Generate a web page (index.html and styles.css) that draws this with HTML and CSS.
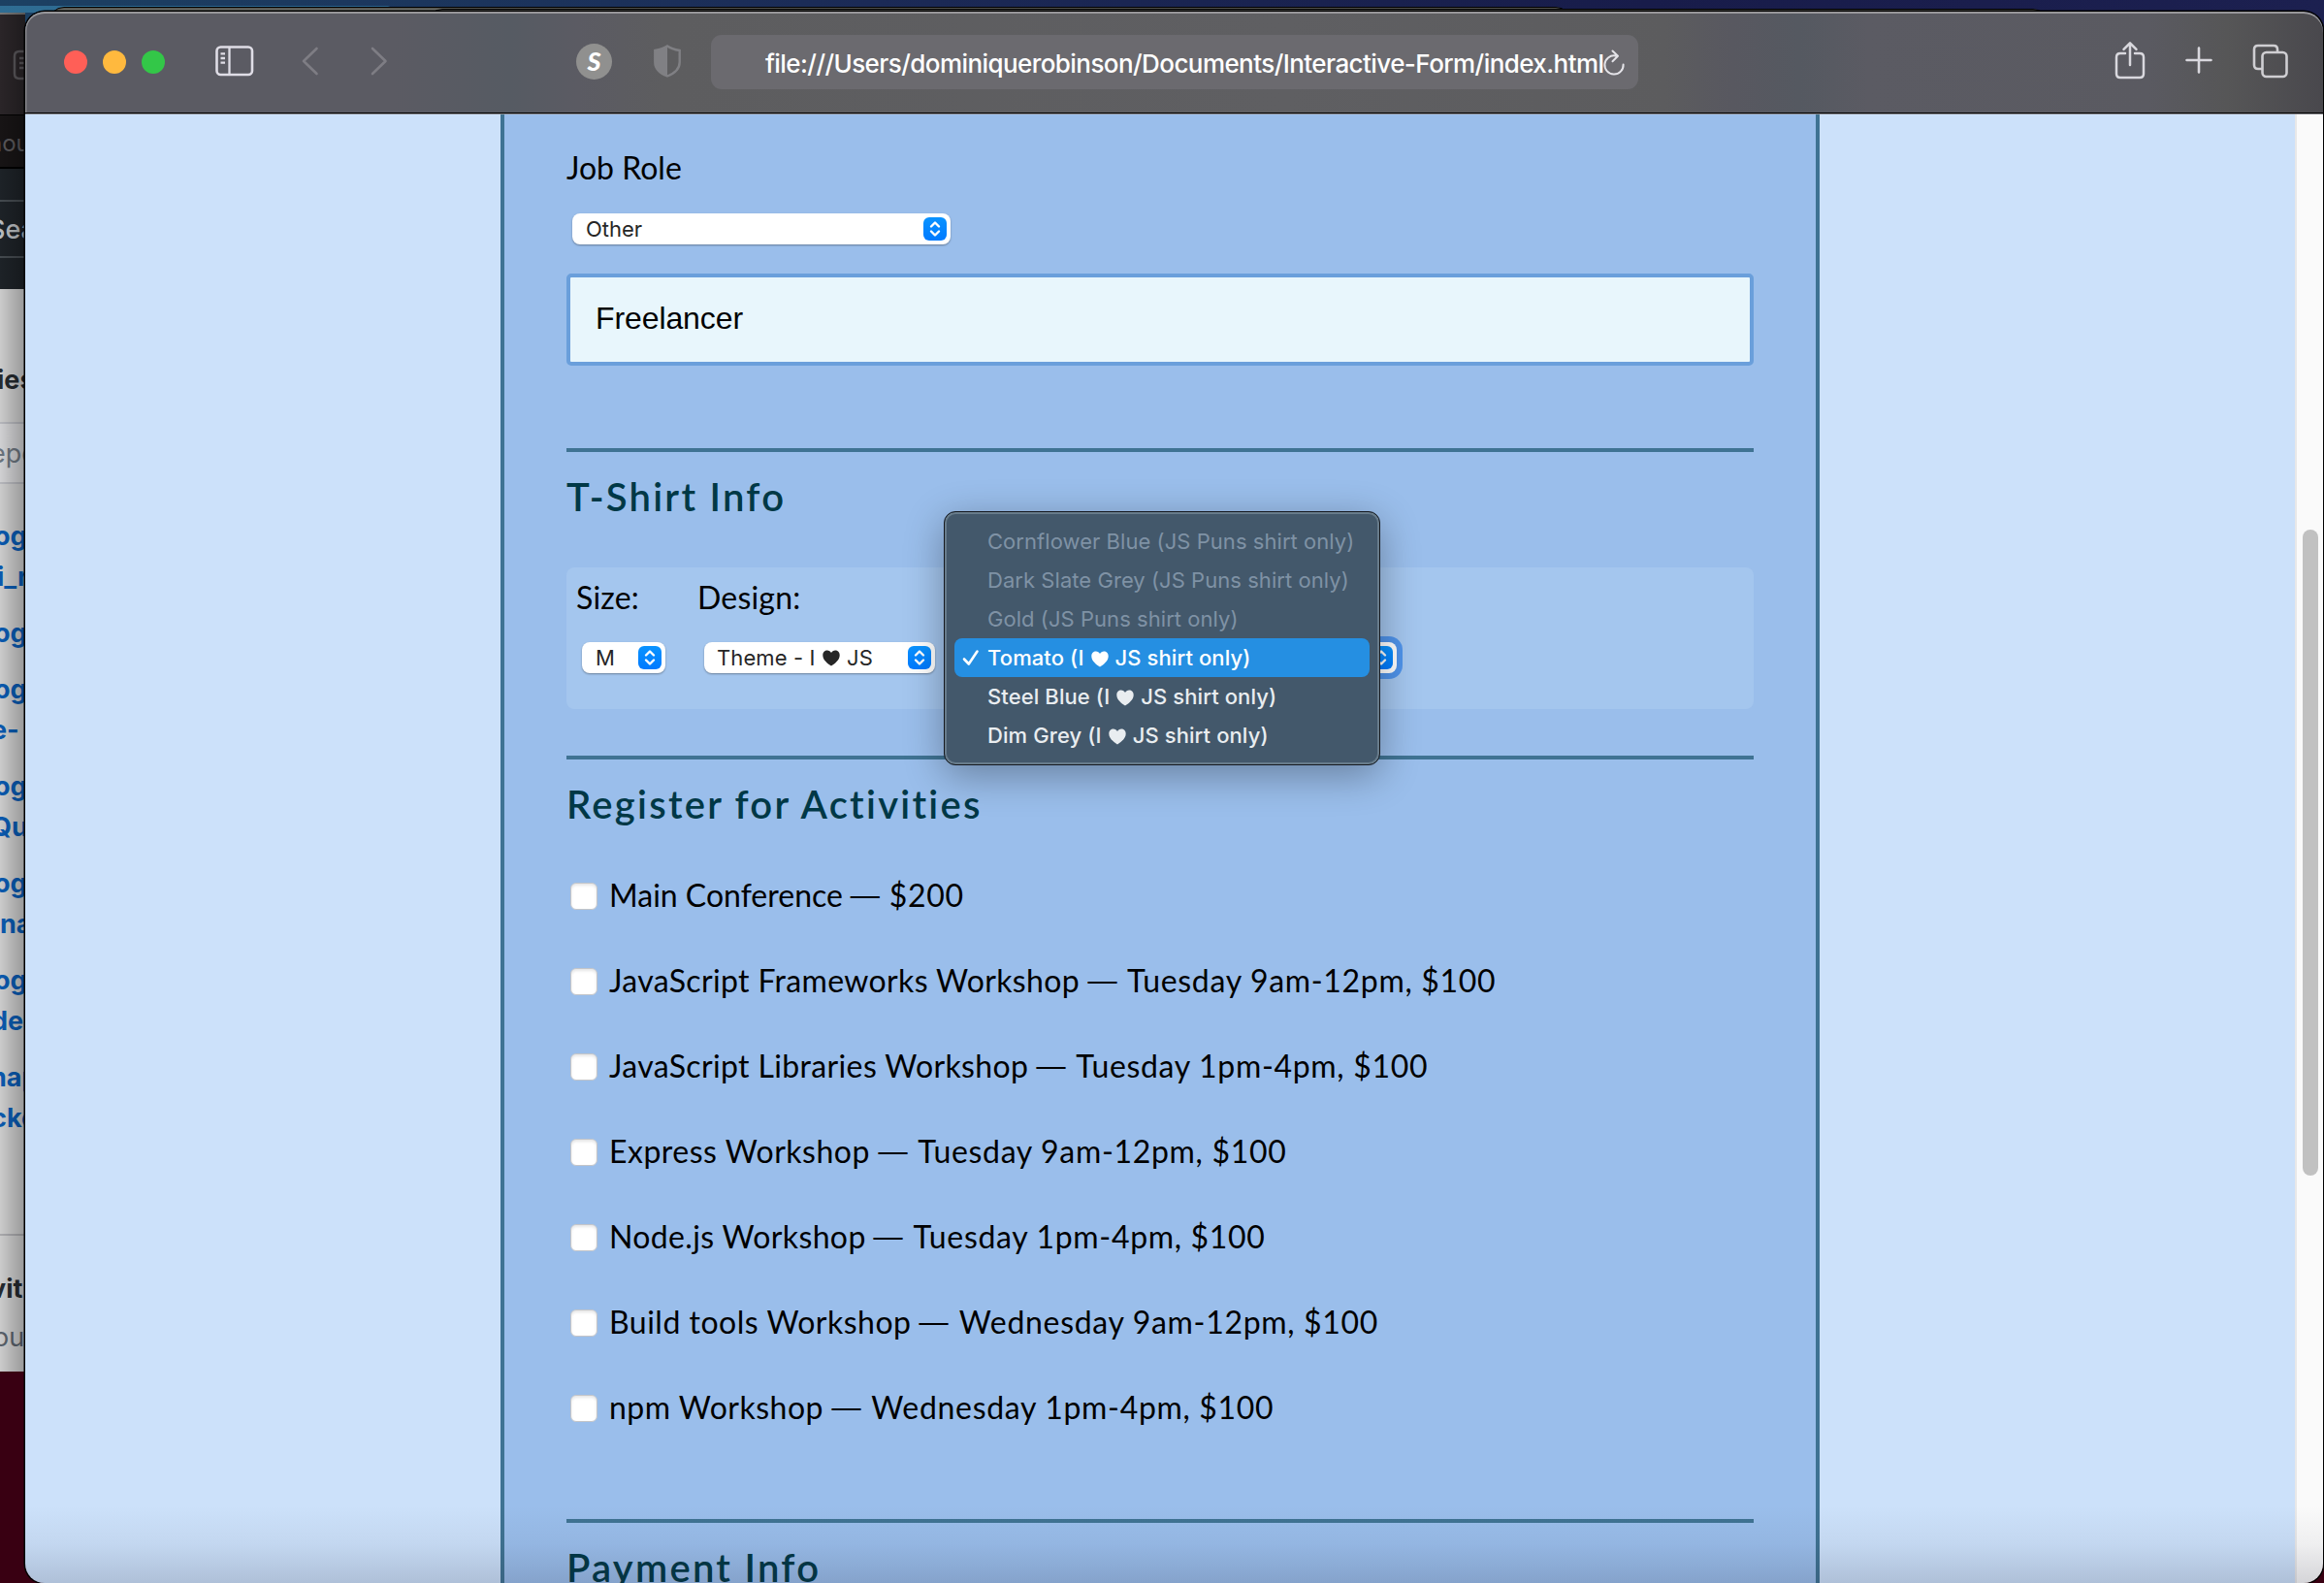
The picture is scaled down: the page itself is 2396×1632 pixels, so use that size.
FILE: index.html
```html
<!DOCTYPE html>
<html lang="en">
<head>
<meta charset="utf-8">
<title>Interactive Form</title>
<link rel="stylesheet" href="styles.css">
</head>
<body>
<svg class="defs" width="0" height="0">
  <symbol id="updown" viewBox="0 0 24 24"><path d="M8 9.5 12 5.5 16 9.5M8 14.5 12 18.5 16 14.5" fill="none" stroke="#fff" stroke-width="2.4" stroke-linecap="round" stroke-linejoin="round"/></symbol>
  <symbol id="heart" viewBox="0 0 18 17"><path d="M9 16.5C5 13.8 0.3 10.2 0.3 5.4 0.3 2.4 2.4 0.5 4.9 0.5 6.7 0.5 8.2 1.4 9 3 9.8 1.4 11.3 0.5 13.1 0.5 15.6 0.5 17.7 2.4 17.7 5.4 17.7 10.2 13 13.8 9 16.5Z" fill="currentColor"/></symbol>
</svg>
<div class="desktop">
  <div class="stack stack-a"></div>
  <div class="stack stack-b"></div>
  <div class="back-window">
    <div class="back-toolbar">
      <svg width="20" height="32" viewBox="0 0 20 32" fill="none" stroke="#59565a" stroke-width="2.5"><path d="M20 2H7Q2 2 2 7V25Q2 30 7 30H20M7 9H14M7 14H14M7 19H14"/></svg>
    </div>
    <div class="back-tabs">hou</div>
    <div class="back-nav"><div class="back-search">Sea</div></div>
    <div class="back-page">
      <div class="back-title">ies</div>
      <div class="back-find">epo</div>
      <div class="repo">og<br><span class="in1">i_r</span></div>
      <div class="repo">og</div>
      <div class="repo">og<br><span class="in2">e-</span></div>
      <div class="repo">og<br><span class="in2">Qu</span></div>
      <div class="repo">og<br><span>na</span></div>
      <div class="repo">og<br><span class="in2">de.</span></div>
      <div class="repo"><span class="in3">nap</span><br><span class="in2">cke</span></div>
      <div class="back-foot"><b>vit</b><br><span class="in4">ou</span></div>
    </div>
  </div>

  <div class="window">
    <div class="toolbar">
      <div class="lights"><i class="red"></i><i class="yellow"></i><i class="green"></i></div>
      <svg class="ic-sidebar" width="40" height="32" viewBox="0 0 40 32" fill="none" stroke="#dfdde6" stroke-width="2.6"><rect x="1.5" y="1.5" width="36.5" height="28.5" rx="4"/><path d="M14.5 2V30M5.5 8.3H10M5.5 13H10M5.5 17.7H10" stroke-width="2.3"/></svg>
      <svg class="ic-back" width="18" height="30" viewBox="0 0 18 30" fill="none" stroke="#7e7d84" stroke-width="2.6" stroke-linecap="round" stroke-linejoin="round"><path d="M15.5 2 2 15 15.5 28"/></svg>
      <svg class="ic-fwd" width="18" height="30" viewBox="0 0 18 30" fill="none" stroke="#7e7d84" stroke-width="2.6" stroke-linecap="round" stroke-linejoin="round"><path d="M2 2 15.5 15 2 28"/></svg>
      <div class="ext">S</div>
      <svg class="ic-shield" width="28" height="34" viewBox="0 0 28 34"><path d="M14 1.5C10.5 4 5.5 5.3 1.3 6V18C1.3 25 7 29.8 14 32.5 21 29.8 26.7 25 26.7 18V6C22.5 5.3 17.5 4 14 1.5Z" fill="none" stroke="#808084" stroke-width="2.4"/><path d="M14 1.5C10.5 4 5.5 5.3 1.3 6V18C1.3 25 7 29.8 14 32.5Z" fill="#808084"/></svg>
      <div class="address"><span class="url">file:///Users/dominiquerobinson/Documents/Interactive-Form/index.html</span><svg class="ic-reload" width="24" height="28" viewBox="0 0 24 28" fill="none" stroke="#e4e3e8" stroke-width="2" stroke-linecap="round" stroke-linejoin="round"><path d="M13.5 6.5A9.6 9.6 0 1 0 21.6 15.5M10.5 1.5 16 6.8 10.5 12.3"/></svg></div>
      <svg class="ic-share" width="32" height="40" viewBox="0 0 32 40" fill="none" stroke="#d9d8de" stroke-width="2.5" stroke-linecap="round" stroke-linejoin="round"><path d="M11 13H6Q2 13 2 17V34Q2 38 6 38H26Q30 38 30 34V17Q30 13 26 13H21M16 25V2.5M9.5 8.8 16 2.3 22.5 8.8"/></svg>
      <svg class="ic-plus" width="28" height="28" viewBox="0 0 28 28" stroke="#d9d8de" stroke-width="2.6" stroke-linecap="round"><path d="M14 1.5V26.5M1.5 14H26.5"/></svg>
      <svg class="ic-tabs" width="37" height="36" viewBox="0 0 37 36" fill="none" stroke="#cfced2" stroke-width="2.6"><rect x="10.5" y="9" width="25" height="25" rx="4"/><path d="M10 26H6Q2 26 2 22V6Q2 2 6 2H22Q26 2 26 6V9"/></svg>
    </div>
    <div class="viewport">
      <div class="page">
        <form class="form">
          <label class="label job">Job Role</label>
          <div class="select select-role"><span>Other</span><svg class="knob"><use href="#updown"/></svg></div>
          <div class="field">Freelancer</div>
          <hr>
          <h2>T-Shirt Info</h2>
          <div class="shirt">
            <div class="col-size"><label class="label">Size:</label><div class="select select-size"><span>M</span><svg class="knob"><use href="#updown"/></svg></div></div>
            <div class="col-design"><label class="label">Design:</label><div class="select select-design"><span>Theme - I <svg class="heart"><use href="#heart"/></svg> JS</span><svg class="knob"><use href="#updown"/></svg></div></div>
            <div class="col-color">
              <div class="select select-color"><svg class="knob"><use href="#updown"/></svg></div>
              <ul class="menu">
                <li class="off">Cornflower Blue (JS Puns shirt only)</li>
                <li class="off">Dark Slate Grey (JS Puns shirt only)</li>
                <li class="off">Gold (JS Puns shirt only)</li>
                <li class="on"><svg class="check" viewBox="0 0 18 18"><path d="M2 10.5 6.8 15.5 15.5 2.5" fill="none" stroke="#fff" stroke-width="2.6" stroke-linecap="round" stroke-linejoin="round"/></svg>Tomato (I <svg class="heart"><use href="#heart"/></svg> JS shirt only)</li>
                <li>Steel Blue (I <svg class="heart"><use href="#heart"/></svg> JS shirt only)</li>
                <li>Dim Grey (I <svg class="heart"><use href="#heart"/></svg> JS shirt only)</li>
              </ul>
            </div>
          </div>
          <hr class="hr2">
          <h2>Register for Activities</h2>
          <div class="activities">
            <label><input type="checkbox"><span>Main Conference <i class="dash">—</i> <span class="time">$200</span></span></label>
            <label><input type="checkbox"><span class="name">JavaScript Frameworks Workshop <i class="dash">—</i> <span class="time">Tuesday 9am-12pm, $100</span></span></label>
            <label><input type="checkbox"><span class="name">JavaScript Libraries Workshop <i class="dash">—</i> <span class="time">Tuesday 1pm-4pm, $100</span></span></label>
            <label><input type="checkbox"><span class="name wide">Express Workshop <i class="dash">—</i> <span class="time">Tuesday 9am-12pm, $100</span></span></label>
            <label><input type="checkbox"><span class="name">Node.js Workshop <i class="dash">—</i> <span class="time">Tuesday 1pm-4pm, $100</span></span></label>
            <label><input type="checkbox"><span class="name wide">Build tools Workshop <i class="dash">—</i> <span class="time">Wednesday 9am-12pm, $100</span></span></label>
            <label><input type="checkbox"><span class="name wide">npm Workshop <i class="dash">—</i> <span class="time">Wednesday 1pm-4pm, $100</span></span></label>
          </div>
          <hr class="hr3">
          <h2>Payment Info</h2>
        </form>
      </div>
      <div class="track"><div class="thumb"></div></div>
    </div>
  </div>
</div>
</body>
</html>
```
FILE: styles.css
```css
* { box-sizing: border-box; }
body { margin: 0; overflow: hidden; font-family: Lato, sans-serif; }
.defs { position: absolute; }

.desktop {
  position: relative;
  width: 2396px;
  height: 1632px;
  overflow: hidden;
  background: linear-gradient(90deg, #2f6d93 0, #2a628b 400px, transparent 402px) 0 6px / 100% 7px no-repeat, linear-gradient(90deg, #1c4163 0, #1b2a56 900px, #181c4a 1700px, #1c2050 100%) 0 0 / 100% 100px no-repeat, #390012;
}
.stack { position: absolute; height: 40px; border: 1px solid #000; border-radius: 16px 16px 0 0; background: #6b6c66; }
.stack-a { left: 50px; top: 7px; width: 1570px; box-shadow: inset 0 1px #55554f; }
.stack-b { left: 440px; top: 9px; width: 1672px; }

.back-window {
  position: absolute;
  left: 0;
  top: 13px;
  width: 26px;
  height: 1401px;
  overflow: hidden;
  white-space: nowrap;
  font: 700 27px/42px Inter, sans-serif;
  background: #cbcbcb;
}
.back-window::after { content: ""; position: absolute; inset: 0; background: linear-gradient(90deg, transparent, rgba(0, 0, 0, .26)); }
.back-toolbar { height: 105px; padding: 36px 0 0 13px; background: #2a2528; border-top: 2px solid #777; }
.back-tabs { height: 56px; border-bottom: 2px solid #000; border-top: 1px solid #000; background: #171415; color: #59575a; font-size: 24px; font-weight: 400; line-height: 58px; text-indent: -12px; }
.back-nav { height: 124px; padding: 32px 0; background: #1d2227; }
.back-search { height: 60px; border: solid #444a4f; border-width: 2px 0; color: #babdc0; font-weight: 500; line-height: 58px; text-indent: -12px; }
.back-page { padding-top: 73px; }
.back-title { color: #24292e; height: 64px; text-indent: -3px; }
.back-find { height: 64px; border: solid #b5b6bb; border-width: 2px 0; color: #6a737d; background: #d0d0d2; font-weight: 400; line-height: 61px; text-indent: -10px; margin-bottom: 33px; }
.repo { color: #0a59ae; margin-bottom: 16px; text-indent: -6px; }
.in1 { margin-left: -3px; }
.in2 { margin-left: -9px; }
.in3 { margin-left: -4px; }
.in4 { margin-left: -7px; }
.back-foot { margin-top: 98px; padding-top: 30px; height: 150px; border-top: 2px solid #a9a9ac; color: #586069; font-weight: 400; line-height: 50px; text-indent: -10px; }
.back-foot b { color: #24292e; font-weight: 700; }

.window {
  position: absolute;
  left: 26px;
  top: 12px;
  width: 2369px;
  height: 1620px;
  overflow: hidden;
  border-radius: 20px;
  box-shadow: 0 0 0 1.5px #000;
  display: flex;
  flex-direction: column;
}
.toolbar {
  height: 105px;
  flex: none;
  display: flex;
  align-items: flex-start;
  border-bottom: 1px solid #000;
  border-radius: 20px 20px 0 0;
  box-shadow: inset 0 2px #98979a, inset 1.5px 0 #858489;
  background: linear-gradient(90deg, #5b5b63 0, #5b5b63 380px, #565b63 500px, #5b5b63 570px, #5d5d5f 660px, #5f5f62 1300px, #5c5c5e 1690px, #585860 1760px, #555961 1830px, #5b5b63 1900px, #5a5a61 2190px, #565657 2270px, #49484d 100%);
}
.lights { display: flex; gap: 16px; margin: 40px 0 0 40px; }
.lights i { width: 24px; height: 24px; border-radius: 50%; }
.red { background: #ff5f57; }
.yellow { background: #ffb93e; }
.green { background: #33c748; }
.ic-sidebar { margin: 35px 0 0 52px; }
.ic-back { margin: 36px 0 0 49px; }
.ic-fwd { margin: 36px 0 0 53px; }
.ext { width: 37px; height: 37px; margin: 33px 0 0 194px; border-radius: 50%; background: #90908f; color: #fff; text-align: center; font: italic 900 27px/36px Lato, sans-serif; }
.ic-shield { margin: 34px 0 0 43px; }
.address { width: 956px; height: 56px; margin: 24px 0 0 31px; padding-left: 56px; border-radius: 11px; background: #6b6a6f; color: #fff; font: 500 26px/60px Inter, sans-serif; white-space: nowrap; display: flex; }
.url { letter-spacing: -.57px; }
.ic-reload { flex: none; margin: 15px 0 0 -1px; }
.ic-share { margin: 30px 0 0 491px; }
.ic-plus { margin: 36px 0 0 41px; }
.ic-tabs { margin: 33px 0 0 41px; }

.viewport { flex: 1; display: flex; position: relative; border-top: 1px solid #8b8c92; }
.viewport::after { content: ""; position: absolute; left: 0; right: 0; bottom: 0; height: 80px; pointer-events: none; background: linear-gradient(rgba(30, 30, 50, 0), rgba(30, 30, 50, .05) 50%, rgba(30, 30, 50, .17)); }
.page { width: 2340px; display: flex; justify-content: center; background: #cce1fa; }
.track { flex: 1; padding: 428px 0 0 6px; background: #fafafa; border-left: 2px solid #e8e8e8; }
.thumb { width: 16px; height: 666px; border-radius: 8px; background: #c1c1c1; }

.form { width: 1360px; height: 1514px; padding: 34px 64px 0; overflow: hidden; border: solid #3f7393; border-width: 0 4px; background: #9abeeb; white-space: nowrap; }
.label { display: block; height: 40px; font-size: 32px; line-height: 42px; color: #000; }
.job { margin-bottom: 28px; }
.select { position: relative; display: flex; justify-content: space-between; align-items: center; height: 32px; padding: 0 4px 0 14px; border-radius: 8px; background: #fff; color: #262626; font: 400 22px/33px Inter, sans-serif; box-shadow: 0 1px 2px rgba(0, 0, 0, .35); }
.knob { width: 24px; height: 24px; border-radius: 6px; background: linear-gradient(#0a93ff, #007aff); }
.heart { width: 18px; height: 17px; margin: 0 1px; vertical-align: -1.5px; }
.select-role { width: 390px; margin-left: 6px; }
.field { height: 95px; margin-top: 30px; padding-left: 26px; border: 4px solid #6a9fdb; border-radius: 5px; background: #e8f6fc; font: 32px/84px "Liberation Sans", Arial, sans-serif; letter-spacing: -.1px; color: #000; }
hr { height: 4px; margin: 85px 0 0; border: 0; background: #3f7393; }
h2 { height: 48px; margin: 20px 0 0; font-size: 40px; line-height: 52px; font-weight: 600; color: #003846; letter-spacing: 2.25px; }
.shirt { display: flex; height: 146px; margin-top: 51px; padding: 9px 0 0 10px; border-radius: 8px; background: rgba(173, 205, 241, .5); }
.shirt .label { margin-bottom: 28px; line-height: 43px; letter-spacing: .2px; }
.col-size { width: 125px; }
.select-size { width: 86px; margin-left: 6px; padding-left: 14px; }
.col-design { width: 255px; }
.select-design { width: 238px; margin-left: 7px; }
.select-design span { margin-left: -1px; letter-spacing: .1px; }
.col-color { position: relative; padding-top: 68px; }
.select-color { width: 450px; margin-left: 16px; justify-content: flex-end; box-shadow: 0 0 0 6px #4f93ea; }
.menu { position: absolute; left: -1px; top: -67px; width: 450px; height: 262px; margin: 0; padding: 10px; list-style: none; border: 1px solid #15191f; border-radius: 12px; background: #43586b; box-shadow: inset 0 0 0 2px #687c8b, 0 10px 40px rgba(0, 0, 0, .33); font: 500 22px/40px Inter, sans-serif; color: #e9edf0; }
.menu li { position: relative; height: 40px; padding-left: 34px; border-radius: 8px; letter-spacing: .1px; }
.menu .off { color: #7f92a5; font-weight: 400; letter-spacing: .05px; }
.menu .on { background: #258fe2; color: #fff; }
.check { position: absolute; left: 8px; top: 11px; width: 18px; height: 18px; }

.hr2 { margin-top: 48px; }
.activities { margin-top: 29px; }
.activities label { display: flex; align-items: center; height: 88px; padding-left: 4px; font-size: 32px; line-height: 40px; }
.activities input { appearance: none; width: 28px; height: 28px; margin: 0 12px 0 0; border: 1px solid #c3c5c9; border-radius: 6px; background: #fff; box-shadow: inset 0 2px 3px rgba(0, 0, 0, .1); }
.activities label > span { padding-bottom: 3px; }
.name { letter-spacing: .36px; }
.name.wide { letter-spacing: .5px; }
.time { letter-spacing: .68px; }
.dash { display: inline-block; margin: 0 4px 0 2px; font-style: normal; transform: scale(1.42, .9); }
.hr3 { margin-top: 70px; }
```
